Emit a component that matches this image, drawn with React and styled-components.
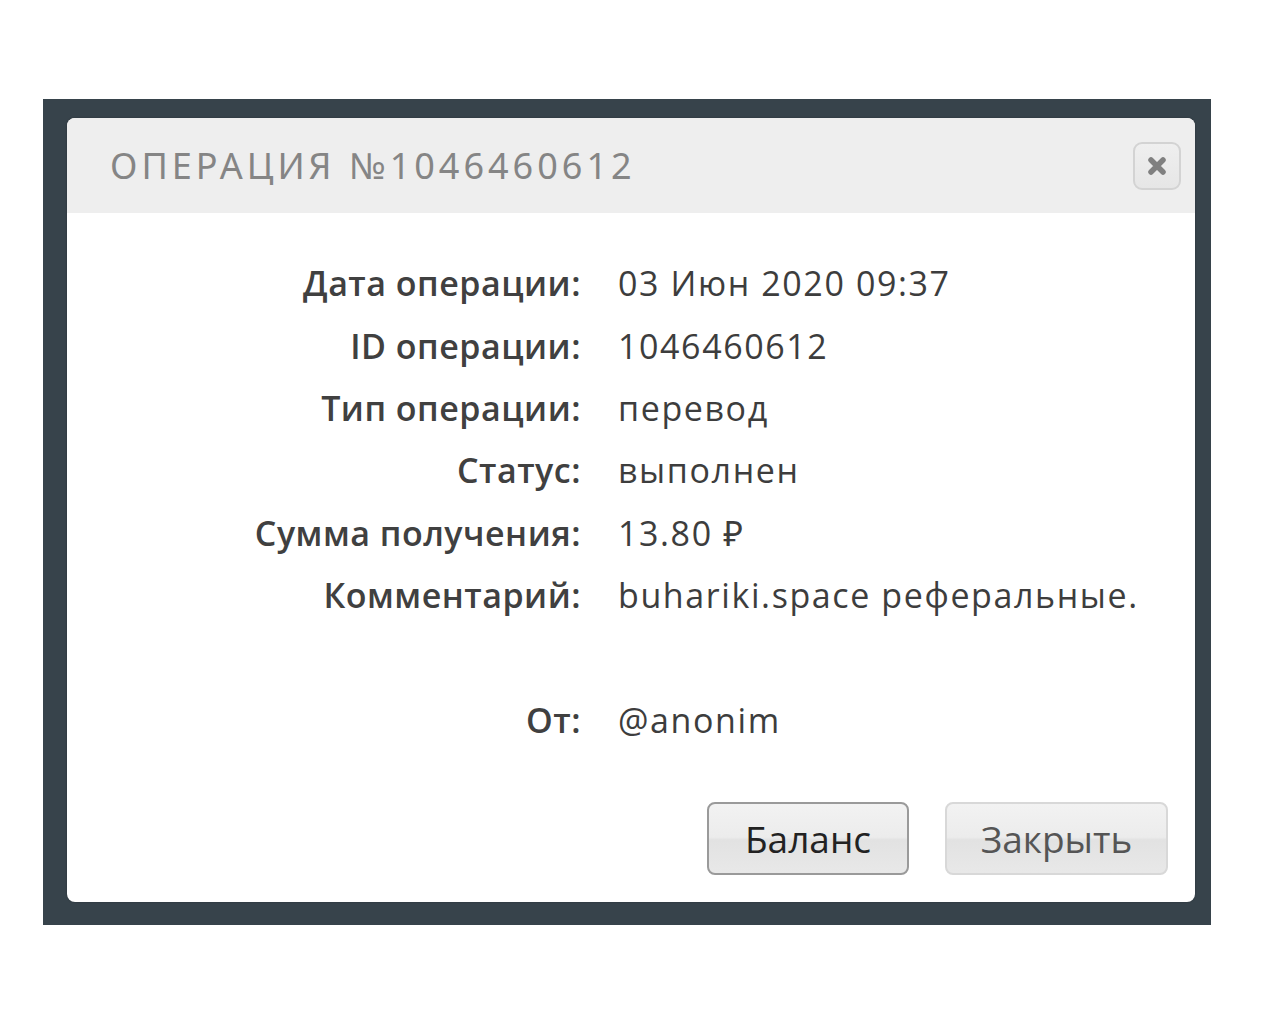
import React from "react";
import styled, { createGlobalStyle } from "styled-components";

const Global = createGlobalStyle`
  html, body { margin: 0; padding: 0; background: #ffffff; }
  body { font-family: "Open Sans", "Noto Sans", sans-serif; }
`;

const Page = styled.div`
  padding: 99px 0 0 43px;
`;

const Backdrop = styled.div`
  width: 1168px;
  height: 826px;
  box-sizing: border-box;
  background: #37434b;
  padding: 19px 16px 23px 24px;
`;

const Modal = styled.div`
  width: 1128px;
  height: 784px;
  background: #ffffff;
  border-radius: 8px;
  overflow: hidden;
  display: flex;
  flex-direction: column;
  box-shadow: 0 0 2px rgba(0,0,0,0.3);
`;

const Header = styled.div`
  height: 95px;
  flex: none;
  background: #eeeeee;
  display: flex;
  align-items: center;
  justify-content: space-between;
  padding: 0 14px 0 43px;
`;

const Title = styled.h1`
  margin: 0;
  font-family: "Noto Sans", Lato, sans-serif;
  font-weight: 400;
  font-size: 36px;
  letter-spacing: 4px;
  color: #858585;
`;

const CloseBtn = styled.button`
  width: 48px;
  height: 48px;
  border: 2px solid #d3d3d3;
  border-radius: 9px;
  background: linear-gradient(#efefef, #e6e6e6);
  display: flex;
  align-items: center;
  justify-content: center;
  padding: 0;
  cursor: pointer;
`;

const Body = styled.div`
  flex: 1;
  display: flex;
  flex-direction: column;
  padding: 39px 27px 27px 0;
`;

const Details = styled.dl`
  margin: 0;
  display: grid;
  grid-template-columns: 514px 1fr;
  column-gap: 37px;
  grid-auto-rows: 62.4px;
  align-items: center;
`;

const Label = styled.dt`
  margin: 0;
  text-align: right;
  font-family: "Open Sans", "Noto Sans", sans-serif;
  font-weight: 600;
  font-size: 34px;
  letter-spacing: 0.5px;
  color: #404040;
  white-space: nowrap;
`;

const Value = styled.dd`
  margin: 0;
  font-family: "Open Sans", "Noto Sans", sans-serif;
  font-weight: 400;
  font-size: 34px;
  letter-spacing: 1.6px;
  color: #3d3d3d;
  white-space: nowrap;
`;

const Spacer = styled.div`
  grid-column: 1 / -1;
`;

const Actions = styled.div`
  margin-top: auto;
  display: flex;
  justify-content: flex-end;
  gap: 36px;
`;

const Button = styled.button`
  height: 73px;
  width: ${(p) => p.$w}px;
  border-radius: 8px;
  border: 2px solid ${(p) => (p.$primary ? "#9a9a9a" : "#d8d8d8")};
  background: linear-gradient(#f2f2f2 0%, #ececec 48%, #e2e2e2 52%, #e8e8e8 100%);
  font-family: "Open Sans", "DejaVu Sans", sans-serif;
  font-size: 37px;
  color: ${(p) => (p.$primary ? "#222222" : "#555555")};
  cursor: pointer;
  padding: 0;
`;

const rows = [
  ["Дата операции:", "03 Июн 2020 09:37"],
  ["ID операции:", "1046460612"],
  ["Тип операции:", "перевод"],
  ["Статус:", "выполнен"],
  ["Сумма получения:", "13.80 ₽"],
  ["Комментарий:", "buhariki.space реферальные."],
];

export default function App() {
  return (
    <>
      <Global />
      <Page>
        <Backdrop>
          <Modal>
            <Header>
              <Title>ОПЕРАЦИЯ №1046460612</Title>
              <CloseBtn aria-label="close">
                <svg width="20" height="20" viewBox="0 0 20 20">
                  <path d="M4 4 L16 16 M16 4 L4 16" stroke="#808080" strokeWidth="5.5" strokeLinecap="round" />
                </svg>
              </CloseBtn>
            </Header>
            <Body>
              <Details>
                {rows.map(([l, v]) => (
                  <React.Fragment key={l}>
                    <Label>{l}</Label>
                    <Value>{v}</Value>
                  </React.Fragment>
                ))}
                <Spacer />
                <Label>От:</Label>
                <Value>@anonim</Value>
              </Details>
              <Actions>
                <Button $primary $w={202}>Баланс</Button>
                <Button $w={223}>Закрыть</Button>
              </Actions>
            </Body>
          </Modal>
        </Backdrop>
      </Page>
    </>
  );
}
